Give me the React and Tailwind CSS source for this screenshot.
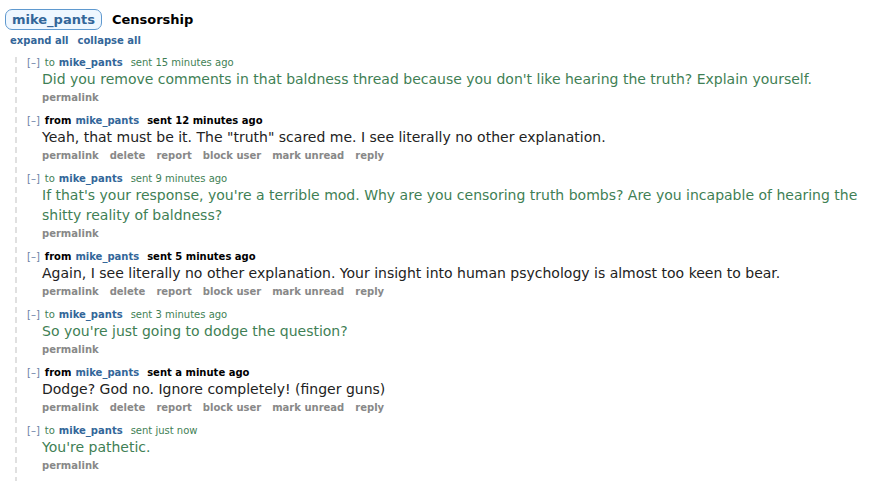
const messages = [
  {
    dir: "to",
    when: "sent 15 minutes ago",
    body: "Did you remove comments in that baldness thread because you don't like hearing the truth? Explain yourself.",
  },
  {
    dir: "from",
    when: "sent 12 minutes ago",
    body: 'Yeah, that must be it. The "truth" scared me. I see literally no other explanation.',
  },
  {
    dir: "to",
    when: "sent 9 minutes ago",
    body: "If that's your response, you're a terrible mod. Why are you censoring truth bombs? Are you incapable of hearing the shitty reality of baldness?",
  },
  {
    dir: "from",
    when: "sent 5 minutes ago",
    body: "Again, I see literally no other explanation. Your insight into human psychology is almost too keen to bear.",
  },
  {
    dir: "to",
    when: "sent 3 minutes ago",
    body: "So you're just going to dodge the question?",
  },
  {
    dir: "from",
    when: "sent a minute ago",
    body: "Dodge? God no. Ignore completely! (finger guns)",
  },
  {
    dir: "to",
    when: "sent just now",
    body: "You're pathetic.",
  },
];

const inboxLinks = ["permalink", "delete", "report", "block user", "mark unread", "reply"];

const Message = ({ msg }) => {
  const sent = msg.dir === "to";
  return (
    <div className="pb-[10px]">
      {/* tagline */}
      <div className="flex items-baseline text-[10px] leading-[12px] pl-[10px]">
        <span className="text-[#6b7fa6] mr-[5px]">[–]</span>
        <span className={sent ? "text-[#3f7f55]" : "text-black font-bold"}>{msg.dir}</span>
        <span className="ml-[4px] font-bold text-[#336699]">mike_pants</span>
        <span className={"ml-[8px] " + (sent ? "text-[#3f7f55]" : "text-black font-bold")}>{msg.when}</span>
      </div>
      {/* body */}
      <div className={"pl-[25px] pr-[10px] text-[14px] leading-[20px] " + (sent ? "text-[#3f7f55]" : "text-[#222]")}>
        {msg.body}
      </div>
      {/* buttons */}
      <div className="flex gap-[11px] pl-[25px] pt-[2px] text-[10px] leading-[14px] font-bold text-[#888]">
        {(sent ? ["permalink"] : inboxLinks).map((l) => (
          <span key={l}>{l}</span>
        ))}
      </div>
    </div>
  );
};

export default function App() {
  return (
    <div className="w-[884px] h-[481px] overflow-hidden bg-white font-['DejaVu_Sans','Verdana',sans-serif]">
      <div className="flex items-center pl-[5px] pt-[9px]">
        <span className="px-[6px] h-[21px] flex items-center rounded-[7px] border border-[#5f99cf] bg-[#eff7ff] text-[13px] font-bold text-[#336699]">
          mike_pants
        </span>
        <span className="ml-[10px] text-[13px] font-bold text-black">Censorship</span>
      </div>
      <div className="flex gap-[9px] pl-[10px] pt-[3px] text-[10px] leading-[15px] font-bold text-[#336699]">
        <span>expand all</span>
        <span>collapse all</span>
      </div>
      <div className="ml-[15px] mt-[9px] border-l-2 border-dashed border-[#e0e0e0]">
        {messages.map((m, i) => (
          <Message key={i} msg={m} />
        ))}
      </div>
    </div>
  );
}
